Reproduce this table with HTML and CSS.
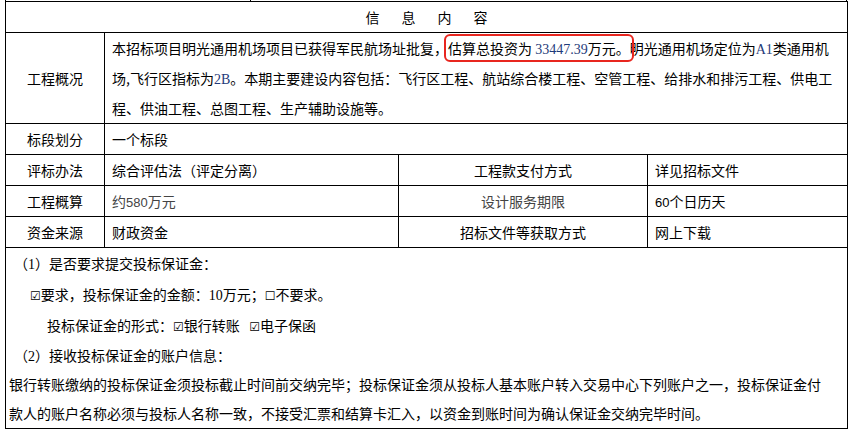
FILE: index.html
```html
<!DOCTYPE html>
<html lang="zh-CN">
<head>
    <meta charset="UTF-8">
    <meta name="viewport" content="width=device-width, initial-scale=1.0">
    <title>信息内容</title>
    <link rel="stylesheet" href="styles.css">
</head>
<body>
    <div class="prev-row">
        <div class="prev-cell"></div>
        <div class="prev-cell"></div>
    </div>
    <table class="info">
        <colgroup>
            <col class="c-label">
            <col class="c-value">
            <col class="c-key">
            <col class="c-last">
        </colgroup>
        <tr>
            <td colspan="4" class="head">信息内容</td>
        </tr>
        <tr>
            <td class="label">工程概况</td>
            <td colspan="3" class="text">本招标项目明光通用机场项目已获得军民航场址批复，<span class="mark">估算总投资为 <span class="num">33447.39</span>万元。</span>明光通用机场定位为<span class="num">A1</span>类通用机场,飞行区指标为<span class="num">2B</span>。本期主要建设内容包括：飞行区工程、航站综合楼工程、空管工程、给排水和排污工程、供电工程、供油工程、总图工程、生产辅助设施等。</td>
        </tr>
        <tr>
            <td class="label">标段划分</td>
            <td colspan="3" class="text">一个标段</td>
        </tr>
        <tr>
            <td class="label">评标办法</td>
            <td class="text">综合评估法（评定分离）</td>
            <td class="label">工程款支付方式</td>
            <td class="text">详见招标文件</td>
        </tr>
        <tr>
            <td class="label">工程概算</td>
            <td class="text grey">约<span class="sans">580</span>万元</td>
            <td class="label grey">设计服务期限</td>
            <td class="text"><span class="sans">60</span>个日历天</td>
        </tr>
        <tr>
            <td class="label">资金来源</td>
            <td class="text">财政资金</td>
            <td class="label">招标文件等获取方式</td>
            <td class="text">网上下载</td>
        </tr>
        <tr>
            <td colspan="4" class="notes">
                <p class="tall">（<span class="serif">1</span>）是否要求提交投标保证金：</p>
                <p class="tall indent1"><span class="box">☑</span>要求，投标保证金的金额：<span class="serif">10</span>万元；<span class="box">☐</span>不要求。</p>
                <p class="tall indent2">投标保证金的形式：<span class="box">☑</span>银行转账&nbsp;&nbsp;&nbsp;<span class="box">☑</span>电子保函</p>
                <p>（<span class="serif">2</span>）接收投标保证金的账户信息：</p>
                <p class="flush">银行转账缴纳的投标保证金须投标截止时间前交纳完毕；投标保证金须从投标人基本账户转入交易中心下列账户之一，投标保证金付款人的账户名称必须与投标人名称一致，不接受汇票和结算卡汇入，以资金到账时间为确认保证金交纳完毕时间。</p>
            </td>
        </tr>
    </table>
</body>
</html>
```

FILE: styles.css
```css
body {
    margin: 0;
    background-color: #fff;
    color: #000;
    font-family: "Noto Sans CJK SC", "Noto Sans", sans-serif;
    font-size: 14px;
}
.prev-row {
    display: grid;
    grid-template-columns: 245px 596px;
    margin-left: 5px;
    width: 842px;
    height: 1px;
    border-right: 1px solid #000;
    box-sizing: border-box;
}
.prev-cell {
    border-left: 1px solid #000;
}
.info {
    margin-left: 5px;
    width: 842px;
    border-collapse: collapse;
    table-layout: fixed;
}
.c-label {
    width: 99px;
}
.c-value {
    width: 294px;
}
.c-key {
    width: 249px;
}
.c-last {
    width: 200px;
}
.info td {
    border: 1px solid #000;
    padding: 0;
    line-height: 30px;
    height: 30px;
}
.head {
    text-align: center;
    letter-spacing: 22px;
    text-indent: 22px;
}
.label {
    text-align: center;
}
.text {
    padding: 0 7px !important;
}
.grey {
    color: #444;
}
.num,
.serif,
.sans,
.box {
    line-height: 1;
}
.num {
    font-family: "Liberation Serif", serif;
    color: #1f3b7a;
}
.serif {
    font-family: "Liberation Serif", serif;
}
.sans {
    font-family: "Liberation Sans", sans-serif;
    font-size: 13px;
}
.mark {
    outline: 2px solid #e8261f;
    outline-offset: 2px;
    border-radius: 2px;
}
.notes {
    vertical-align: top;
}
.notes p {
    margin: 0;
    line-height: 29px;
    padding-left: 8px;
}
.notes p.tall {
    line-height: 31px;
}
.notes .indent1 {
    padding-left: 24px;
}
.notes .indent2 {
    padding-left: 41px;
}
.notes .flush {
    padding-left: 3px;
    width: 815px;
}
.box {
    font-family: "DejaVu Sans", sans-serif;
    font-size: 12px;
}
```
